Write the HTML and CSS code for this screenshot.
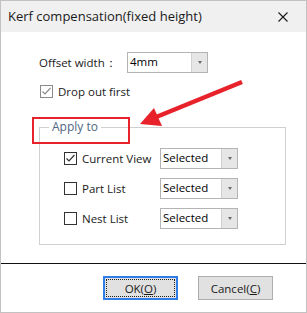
FILE: index.html
```html
<!DOCTYPE html>
<html>
<head>
<meta charset="utf-8">
<link rel="stylesheet" href="styles.css">
</head>
<body>
<div class="dialog">
  <div class="titlebar">
    <span class="title">Kerf compensation(fixed height)</span>
    <svg class="close" width="10" height="10" viewBox="0 0 10 10"><path d="M0.5 0.5L9.5 9.5M9.5 0.5L0.5 9.5" stroke="#1a1a1a" stroke-width="1.1" fill="none"/></svg>
  </div>
  <div class="body">
    <div class="row offset-row">
      <span class="label">Offset width：</span>
      <div class="combo combo-offset"><span class="combo-text">4mm</span><span class="combo-btn"><i class="tri"></i></span></div>
    </div>
    <div class="row check-row drop-row">
      <span class="check check-gray"><svg width="11" height="11" viewBox="0 0 11 11"><path d="M1.5 5.5L4 8L9.5 2" stroke="#8a8a8a" stroke-width="1.2" fill="none"/></svg></span>
      <span class="check-label">Drop out first</span>
    </div>
    <fieldset class="group">
      <legend class="legend">Apply to</legend>
      <div class="group-row">
        <div class="row check-row item">
          <span class="check"><svg width="11" height="11" viewBox="0 0 11 11"><path d="M1.5 5.5L4 8L9.5 2" stroke="#333" stroke-width="1.2" fill="none"/></svg></span>
          <span class="check-label">Current View</span>
        </div>
        <div class="combo combo-sel"><span class="combo-text">Selected</span><span class="combo-btn"><i class="tri"></i></span></div>
      </div>
      <div class="group-row">
        <div class="row check-row item">
          <span class="check"></span>
          <span class="check-label">Part List</span>
        </div>
        <div class="combo combo-sel"><span class="combo-text">Selected</span><span class="combo-btn"><i class="tri"></i></span></div>
      </div>
      <div class="group-row">
        <div class="row check-row item">
          <span class="check"></span>
          <span class="check-label">Nest List</span>
        </div>
        <div class="combo combo-sel"><span class="combo-text">Selected</span><span class="combo-btn"><i class="tri"></i></span></div>
      </div>
    </fieldset>
  </div>
  <div class="separator"></div>
  <div class="buttons">
    <button class="btn btn-default"><span class="focus">OK(<u>O</u>)</span></button>
    <button class="btn">Cancel(<u>C</u>)</button>
  </div>
  <svg class="annot" width="307" height="313" viewBox="0 0 307 313">
    <rect x="33" y="118" width="96" height="25" fill="none" stroke="#e8222a" stroke-width="2"/>
    <line x1="242" y1="82" x2="155" y2="117.5" stroke="#e8222a" stroke-width="4.5"/>
    <polygon points="140,124 154,108 162,126" fill="#e8222a"/>
  </svg>
</div>
</body>
</html>
```

FILE: styles.css
```css
* { box-sizing: border-box; }
html, body { margin: 0; padding: 0; background: #ffffff; }
body {
  font-family: "Open Sans", "Noto Sans", sans-serif;
  font-size: 11.5px;
  color: #1a1a1a;
}
.dialog {
  position: relative;
  width: 307px;
  height: 313px;
  border: 1px solid #c2c2c2;
  background: #ffffff;
  display: flex;
  flex-direction: column;
}
.titlebar {
  height: 31px;
  background: #f0f0f0;
  display: flex;
  align-items: center;
  justify-content: space-between;
  padding: 0 18px 0 7px;
}
.title {
  font-size: 13px;
  color: #1a1a1a;
  line-height: 31px;
}
.close { display: block; }
.body {
  padding: 20px 0 0 38px;
}
.row { display: flex; align-items: center; }
.offset-row { height: 21px; }
.label { width: 88px; white-space: nowrap; }
.combo {
  display: flex;
  height: 21px;
  border: 1px solid #b4b4b4;
  background: #ffffff;
}
.combo-offset { width: 81px; }
.combo-sel { width: 78px; height: 21px; }
.combo-text {
  flex: 1;
  padding-left: 2px;
  line-height: 18px;
  color: #000;
}
.combo-btn {
  width: 16px;
  background: #e6e6e6;
  border-left: 1px solid #d0d0d0;
  display: flex;
  align-items: center;
  justify-content: center;
}
.tri {
  width: 0; height: 0;
  border-left: 2.5px solid transparent;
  border-right: 2.5px solid transparent;
  border-top: 3px solid #6a6a6a;
}
.check-row { height: 13px; }
.drop-row { margin-top: 12px; margin-left: 1px; }
.check {
  width: 13px; height: 13px;
  border: 1px solid #333333;
  background: #fff;
  display: flex;
  align-items: center;
  justify-content: center;
  flex: none;
}
.check-gray { border-color: #8a8a8a; }
.check-label { margin-left: 5px; color: #1a1a1a; white-space: nowrap; }
.group {
  margin: 21px 0 0 0;
  width: 247px;
  border: 1px solid #d0d0d0;
  padding: 13px 0 15px 0;
  min-width: 0;
}
.legend {
  margin-left: 9px;
  padding: 0 3px;
  line-height: 16px;
  font-size: 12px;
  color: #4f6785;
}
.group-row { display: flex; align-items: center; height: 21px; margin-bottom: 9px; padding-left: 24px; }
.group-row:last-child { margin-bottom: 0; }
.item { width: 96px; }
.separator {
  margin-top: 18px;
  height: 1px;
  background: #111;
}
.buttons {
  display: flex;
  justify-content: flex-end;
  gap: 20px;
  padding: 12px 33px 0 0;
}
.btn {
  width: 75px;
  height: 24px;
  background: #e1e1e1;
  border: 1px solid #adadad;
  font-family: inherit;
  font-size: 11.5px;
  color: #1a1a1a;
  padding: 0;
  margin: 0;
  display: flex;
  align-items: center;
  justify-content: center;
}
.btn-default {
  border: 2px solid #2f7de6;
  padding: 1px;
}
.focus {
  display: flex;
  align-items: center;
  justify-content: center;
  width: 100%;
  height: 100%;
  border: 1px dotted #222;
}
u { text-underline-offset: 1px; }
.annot {
  position: absolute;
  left: -1px;
  top: -1px;
  pointer-events: none;
}
```
